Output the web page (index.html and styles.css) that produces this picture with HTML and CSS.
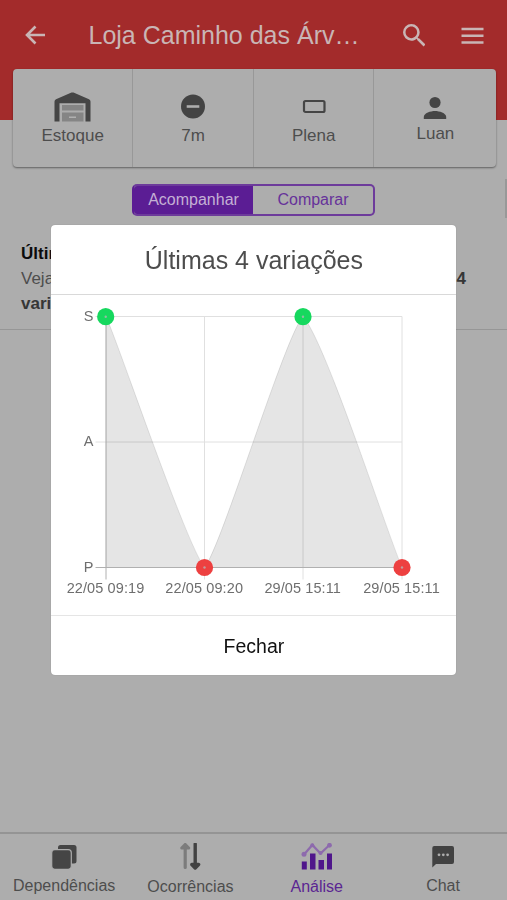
FILE: index.html
```html
<!DOCTYPE html>
<html lang="pt-BR">
<head>
<meta charset="utf-8">
<meta name="viewport" content="width=device-width, initial-scale=1">
<title>Análise</title>
<link rel="stylesheet" href="styles.css">
</head>
<body>
<div class="app">
  <header class="header">
    <svg class="back" viewBox="0 0 24 24"><path d="M22 12H4M12.500 3.500L4 12l8.500 8.500"/></svg>
    <h1 class="title">Loja Caminho das Árv…</h1>
    <svg class="search" viewBox="3 3 17.500 17.500"><path d="M15.500 14h-.79l-.28-.27A6.471 6.471 0 0 0 16 9.500 6.500 6.500 0 1 0 9.500 16c1.610 0 3.090-.59 4.230-1.570l.27.28v.79l5 4.990L20.490 19l-4.990-5zm-6 0C7.010 14 5 11.990 5 9.500S7.010 5 9.500 5 14 7.010 14 9.500 11.990 14 9.500 14z"/></svg>
    <svg class="menu" viewBox="0 0 23 17"><path d="M.5 2h22M.5 8.800h22M.5 15.500h22"/></svg>
  </header>
  <section class="info">
    <div class="cell">
      <svg width="37" height="30" viewBox="0 0 37 30"><path fill="#454545" d="M.5 29.500V9.500Q.5 8 2 7.200L17.500.6q1-.4 2 0L35 7.200q1.500.8 1.500 2.300v20h-5V11.200H5.500v18.300z"/><path fill="#858585" d="M8 13h21.500v5.500H8zM8 20.500h21.500v9H8z"/><path fill="#b0b0b0" d="M15 24.500h7v1.500h-7z"/></svg>
      <span>Estoque</span>
    </div>
    <div class="cell">
      <svg width="24" height="30" viewBox="0 0 24 30"><circle cx="12" cy="14.500" r="12" fill="#434343"/><path fill="#adadad" d="M5.700 13.200h12.600v2.600H5.700z"/></svg>
      <span>7m</span>
    </div>
    <div class="cell">
      <svg width="24" height="30" viewBox="0 0 24 30"><rect x="2" y="9" width="20.500" height="11" rx="1.500" fill="none" stroke="#454545" stroke-width="2.200"/></svg>
      <span>Plena</span>
    </div>
    <div class="cell">
      <svg width="24" height="28" viewBox="0 0 24 28"><circle cx="12" cy="10.500" r="5.600" fill="#454545"/><path fill="#454545" d="M.8 27v-2c0-4 7-6 11.200-6s11.200 2 11.200 6v2z"/></svg>
      <span>Luan</span>
    </div>
  </section>
  <div class="segment"><span class="active">Acompanhar</span><span>Comparar</span></div>
  <section class="entry">
    <strong class="entry-title">Últimas variações</strong>
    <p class="entry-line"><span>Veja abaixo quais foram as últimas</span><b>4</b></p>
    <p class="entry-line"><b>variações</b></p>
  </section>
  <div class="scrollbar"></div>
  <nav class="tabs">
    <div class="tab">
      <svg width="28" height="30" viewBox="0 0 28 30"><rect x="8" y="2" width="18.500" height="18.500" rx="2.500" fill="#454545"/><rect x="1.700" y="6.700" width="19.600" height="19.600" rx="3" fill="#454545" stroke="#adadad" stroke-width="1.200"/></svg>
      <span>Dependências</span>
    </div>
    <div class="tab low">
      <svg width="24" height="30" viewBox="0 0 24 30"><path d="M7.200 24.500V4M3.800 5L7.200 1.500l3.400 3.500z" fill="#7c7c7c" stroke="#7c7c7c" stroke-width="3.200" stroke-linejoin="round" stroke-linecap="round"/><path d="M17.200 1v22M13.800 21.500l3.400 3.500 3.400-3.500z" fill="#424242" stroke="#424242" stroke-width="3.400" stroke-linejoin="round" stroke-linecap="round"/></svg>
      <span>Ocorrências</span>
    </div>
    <div class="tab low current">
      <svg width="32" height="30" viewBox="0 0 32 30"><path d="M3 11.500l8.300-9.500 8.200 8.500L28.500 2" fill="none" stroke="#8d6aad" stroke-width="2.200"/><g fill="#8d6aad"><circle cx="3" cy="11.300" r="2.500"/><circle cx="11.300" cy="2.300" r="2"/><circle cx="19.500" cy="10" r="2"/><circle cx="28.500" cy="2.300" r="2.400"/></g><path fill="#4f168b" d="M.8 18.500h5v8h-5zM9 10.500h5.500v16H9zM17.500 17H23v9.500h-5.500zM26 10.500h5v16h-5z"/></svg>
      <span>Análise</span>
    </div>
    <div class="tab">
      <svg width="24" height="30" viewBox="0 0 24 30"><path fill="#424242" d="M3.300 3h17.700a2 2 0 0 1 2 2v14a2 2 0 0 1-2 2H5L1.300 24.500V5a2 2 0 0 1 2-2z"/><g fill="#adadad"><circle cx="8" cy="11.800" r="1.400"/><circle cx="12.300" cy="11.800" r="1.400"/><circle cx="16.600" cy="11.800" r="1.400"/></g></svg>
      <span>Chat</span>
    </div>
  </nav>
</div>
<div class="overlay">
  <div class="modal">
    <h2 class="modal-title">Últimas 4 variações</h2>
    <svg class="chart" viewBox="51.500 295 405 320">
      <path class="grid" d="M96 316.500h306.500M96 442h306.500M205 316.500v263M303.500 316.500v263M402.500 316.500v263"/>
      <path class="area" d="M106.500 316.500C122 352 185 540 205 567.500C222 547 285 337 303.500 316.500C326 342 383 520 402.500 567.500H106.500z"/>
      <path class="axis" d="M96 567.500h306.500M106.500 316.500v263"/>
      <g class="up"><circle cx="106.200" cy="316.700" r="8.600"/><circle cx="303.500" cy="316.700" r="8.600"/></g>
      <g class="down"><circle cx="205" cy="567.500" r="8.600"/><circle cx="402.500" cy="567.500" r="8.600"/></g>
      <g class="dots"><circle cx="106.200" cy="316.700" r="1.200"/><circle cx="303.500" cy="316.700" r="1.200"/><circle cx="205" cy="567.500" r="1.200"/><circle cx="402.500" cy="567.500" r="1.200"/></g>
      <g class="ylabels"><text x="94" y="321">S</text><text x="94" y="446">A</text><text x="94" y="571.500">P</text></g>
      <g class="xlabels"><text x="106" y="592.500">22/05 09:19</text><text x="204.700" y="592.500">22/05 09:20</text><text x="303.200" y="592.500">29/05 15:11</text><text x="402" y="592.500">29/05 15:11</text></g>
    </svg>
    <button class="close">Fechar</button>
  </div>
</div>
</body>
</html>
```
FILE: styles.css
```css
* { box-sizing: border-box; }
body, h1, h2, p { margin: 0; }
body {
  height: 900px;
  overflow: hidden;
  background: #adadad;
  color: #4d4d4d;
  font-family: "Liberation Sans", Arial, sans-serif;
}
.app { height: 900px; display: flex; flex-direction: column; position: relative; }
.header {
  height: 120px;
  flex: none;
  background: #a32b2b;
  display: flex;
  align-items: flex-start;
  padding: 0 23px 0 23px;
}
.back { width: 24px; height: 24px; margin-top: 23px; fill: none; stroke: #c9b5b5; stroke-width: 2.6; }
.title {
  width: 290px;
  margin-left: 41.500px;
  line-height: 70px;
  font-size: 25px;
  font-weight: 400;
  color: #c9b5b5;
  white-space: nowrap;
}
.search { width: 22.500px; height: 22.500px; margin: 24px 0 0 24px; fill: #c9b5b5; }
.menu { width: 23px; height: 17px; margin: 26.500px 0 0 auto; fill: none; stroke: #c9b5b5; stroke-width: 2.400; }
.info {
  height: 98px;
  flex: none;
  width: 483.400px;
  margin: -51px 0 0 13px;
  display: grid;
  grid-template-columns: 120.400px 120.500px 120.500px 122px;
  background: #adadad;
  border-radius: 4px;
  box-shadow: 0 1px 2px rgba(0, 0, 0, .45);
}
.cell {
  display: flex;
  flex-direction: column;
  align-items: center;
  padding-top: 23px;
  font-size: 17px;
  line-height: 20px;
  border-right: 1px solid #989898;
}
.cell span { margin-top: 4px; }
.cell:last-child { border-right: 0; }
.segment {
  flex: none;
  width: 243px;
  height: 32px;
  margin: 17px 0 0 132px;
  display: grid;
  grid-template-columns: 119px 1fr;
  border: 2px solid #6d3b9b;
  border-left-color: #5b1d94;
  border-radius: 5px;
  overflow: hidden;
  font-size: 16px;
  line-height: 28px;
  text-align: center;
  color: #66329a;
}
.segment .active { background: #5b1d94; color: #c4b0d4; }
.entry {
  flex: none;
  height: 114px;
  padding: 26px 41px 0 21px;
  border-bottom: 1px solid #969696;
  font-size: 17px;
}
.entry-title { display: block; line-height: 24px; color: #0c0c0c; }
.entry-line { display: flex; justify-content: space-between; line-height: 24.500px; }
.entry-title + .entry-line { margin-top: 1px; }
.entry-line b { color: #363636; }
.scrollbar { position: absolute; right: 0; top: 179px; width: 2px; height: 39px; background: #989898; }
.tabs {
  margin-top: auto;
  height: 68px;
  display: grid;
  grid-template-columns: repeat(4, 126.300px);
  padding-left: 1px;
  border-top: 2px solid #949494;
  font-size: 16px;
}
.tab { display: flex; flex-direction: column; align-items: center; padding-top: 9px; }
.tab svg { flex: none; }
.tab span { line-height: 20px; margin-top: 2.500px; }
.low span { margin-top: 3.500px; }
.current { color: #5b2592; }
.overlay {
  position: fixed;
  inset: 0;
  display: flex;
  align-items: center;
  justify-content: center;
  padding-left: .8px;
}
.modal {
  width: 405px;
  height: 449.600px;
  display: flex;
  flex-direction: column;
  background: #fff;
  border-radius: 4px;
  box-shadow: 0 0 1px rgba(0, 0, 0, .3);
}
.modal-title {
  height: 69.800px;
  line-height: 70px;
  border-bottom: 1px solid #d9d9d9;
  font-size: 25px;
  font-weight: 400;
  text-align: center;
}
.chart { display: block; width: 405px; height: 320px; flex: none; }
.grid { fill: none; stroke: #e0e0e0; }
.area { fill: rgba(0, 0, 0, .1); stroke: rgba(0, 0, 0, .1); }
.axis { fill: none; stroke: #b0b0b0; }
.up { fill: #16d85e; }
.down { fill: #ed4040; }
.dots { fill: rgba(180, 180, 180, .8); }
.ylabels, .xlabels { font-size: 14.500px; fill: #6e6e6e; letter-spacing: .1px; }
.ylabels { text-anchor: end; }
.xlabels { text-anchor: middle; }
.close {
  flex: 1;
  padding: 2px 0 0;
  border: 0;
  border-top: 1px solid #e5e5e5;
  background: none;
  font: 19.500px "Liberation Sans", Arial, sans-serif;
  color: #111;
}
```
